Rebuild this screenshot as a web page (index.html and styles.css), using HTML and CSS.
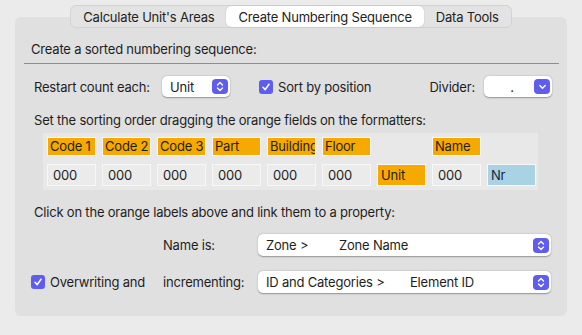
FILE: index.html
```html
<!DOCTYPE html>
<html>
<head>
    <title>Create Numbering Sequence</title>
    <link rel="stylesheet" href="styles.css">
</head>
<body>
    <div class="tabs">
        <div class="tab">Calculate Unit's Areas</div>
        <div class="tab tabActiva">Create Numbering Sequence</div>
        <div class="tab">Data Tools</div>
    </div>
    <div class="panel">
        <div class="encabezado">Create a sorted numbering sequence:</div>

        <div class="fila filaOpciones">
            <span class="etiquetaRestart">Restart count each:</span>
            <div class="combo comboUnit">
                <span>Unit</span>
                <span class="botonAzul">
                    <svg width="8" height="11" viewBox="0 0 8 11"><path d="M1.5 4 L4 1.5 L6.5 4 M1.5 7 L4 9.5 L6.5 7" fill="none" stroke="#fff" stroke-width="1.4" stroke-linecap="round" stroke-linejoin="round"/></svg>
                </span>
            </div>
            <label class="check checkSort">
                <span class="cajita"><svg width="10" height="10" viewBox="0 0 10 10"><path d="M2 5.3 L4.2 7.6 L8 2.3" fill="none" stroke="#fff" stroke-width="1.6" stroke-linecap="round" stroke-linejoin="round"/></svg></span>
                Sort by position
            </label>
            <span class="etiquetaDivider">Divider:</span>
            <div class="combo comboDivider">
                <span class="punto">.</span>
                <span class="botonAzul">
                    <svg width="9" height="6" viewBox="0 0 9 6"><path d="M1.8 1.5 L4.5 4.2 L7.2 1.5" fill="none" stroke="#fff" stroke-width="1.5" stroke-linecap="round" stroke-linejoin="round"/></svg>
                </span>
            </div>
        </div>

        <div class="texto textoOrden">Set the sorting order dragging the orange fields on the formatters:</div>

        <div class="formateador">
            <div class="campo naranja">Code 1</div>
            <div class="campo naranja">Code 2</div>
            <div class="campo naranja">Code 3</div>
            <div class="campo naranja">Part</div>
            <div class="campo naranja">Building</div>
            <div class="campo naranja">Floor</div>
            <div></div>
            <div class="campo naranja">Name</div>
            <div></div>

            <div class="campo entrada">000</div>
            <div class="campo entrada">000</div>
            <div class="campo entrada">000</div>
            <div class="campo entrada">000</div>
            <div class="campo entrada">000</div>
            <div class="campo entrada">000</div>
            <div class="campo entrada naranja">Unit</div>
            <div class="campo entrada">000</div>
            <div class="campo entrada celeste">Nr</div>
        </div>

        <div class="texto textoClick">Click on the orange labels above and link them to a property:</div>

        <div class="propiedades">
            <div></div>
            <span>Name is:</span>
            <div class="combo comboLargo">
                <span class="rutaZona">Zone &gt;</span>
                <span>Zone Name</span>
                <span class="botonAzul">
                    <svg width="8" height="11" viewBox="0 0 8 11"><path d="M1.5 4 L4 1.5 L6.5 4 M1.5 7 L4 9.5 L6.5 7" fill="none" stroke="#fff" stroke-width="1.4" stroke-linecap="round" stroke-linejoin="round"/></svg>
                </span>
            </div>

            <label class="check">
                <span class="cajita"><svg width="10" height="10" viewBox="0 0 10 10"><path d="M2 5.3 L4.2 7.6 L8 2.3" fill="none" stroke="#fff" stroke-width="1.6" stroke-linecap="round" stroke-linejoin="round"/></svg></span>
                Overwriting and
            </label>
            <span>incrementing:</span>
            <div class="combo comboLargo">
                <span class="rutaId">ID and Categories &gt;</span>
                <span>Element ID</span>
                <span class="botonAzul">
                    <svg width="8" height="11" viewBox="0 0 8 11"><path d="M1.5 4 L4 1.5 L6.5 4 M1.5 7 L4 9.5 L6.5 7" fill="none" stroke="#fff" stroke-width="1.4" stroke-linecap="round" stroke-linejoin="round"/></svg>
                </span>
            </div>
        </div>
    </div>
</body>
</html>
```
FILE: styles.css
```css
* {
    box-sizing: border-box;
}

body {
    margin: 0;
    padding: 0;
    background-color: #ebebeb;
    font-family: Inter, "Liberation Sans", sans-serif;
    font-size: 13px;
    letter-spacing: -0.2px;
    color: #1e1e1e;
}

.tabs {
    display: flex;
    width: max-content;
    margin: 5px auto 0;
    height: 23px;
    background-color: #e3e3e3;
    border: 1px solid #d3d3d3;
    border-radius: 6px;
    position: relative;
    z-index: 1;
}

.tab {
    display: flex;
    align-items: center;
    padding: 0 12px;
    color: #222;
}

.tabActiva {
    background-color: #fff;
    border-radius: 5px;
    box-shadow: 0 0 1px rgba(0, 0, 0, 0.35);
}

.panel {
    margin: -11px 15px 0;
    padding: 24px 15px 23px 19px;
    background-color: #e0e0e0;
    border-radius: 6px;
}

.encabezado {
    margin: 0 -7px 0 -10px;
    padding: 0 0 6px 7px;
    line-height: 16px;
    border-bottom: 1px solid #8e8e8e;
}

.fila {
    display: flex;
    align-items: center;
}

.filaOpciones {
    margin-top: 12px;
    height: 21px;
}

.etiquetaRestart {
    width: 128px;
}

.combo {
    display: flex;
    align-items: center;
    height: 21px;
    background-color: #fff;
    border-radius: 5px;
    box-shadow: 0 0.5px 1.5px rgba(0, 0, 0, 0.35);
    padding: 0 2px 0 8px;
}

.comboUnit {
    width: 68px;
    justify-content: space-between;
}

.botonAzul {
    display: flex;
    align-items: center;
    justify-content: center;
    width: 16px;
    height: 15px;
    margin-left: auto;
    background-color: #5f5cf0;
    border-radius: 4px;
}

.check {
    display: flex;
    align-items: center;
    gap: 5px;
}

.checkSort {
    margin-left: 29px;
}

.cajita {
    display: flex;
    align-items: center;
    justify-content: center;
    width: 14px;
    height: 14px;
    background-color: #5f5cf0;
    border-radius: 3px;
}

.etiquetaDivider {
    margin-left: auto;
    margin-right: 9px;
}

.comboDivider {
    width: 68px;
}

.punto {
    width: 40px;
    text-align: center;
}

.texto {
    line-height: 16px;
}

.textoOrden {
    margin-top: 15px;
}

.formateador {
    display: grid;
    grid-template-columns: repeat(9, 49px);
    grid-template-rows: 19px 22px;
    column-gap: 6px;
    row-gap: 8px;
    margin: 5px 14px 0 9px;
    padding: 4px 2px 4px 4px;
    background-color: #e8e8e8;
}

.campo {
    border: 1px solid #f7f7f7;
    padding: 0 2px;
    white-space: nowrap;
    overflow: hidden;
    line-height: 17px;
}

.naranja {
    background-color: #f6a900;
}

.entrada {
    background-color: #ebebeb;
    line-height: 20px;
    padding-left: 5px;
}

.entrada.naranja {
    background-color: #f6a900;
    padding-left: 3px;
}

.celeste {
    background-color: #a9d2e4;
    color: #17263a;
    padding-left: 3px;
}

.textoClick {
    margin-top: 14px;
}

.propiedades {
    display: grid;
    grid-template-columns: 132px 95px 293px;
    grid-auto-rows: 22px;
    row-gap: 15px;
    align-items: center;
    margin: 14px 0 0 -3px;
}

.comboLargo {
    height: 22px;
}

.rutaZona {
    width: 73px;
}

.rutaId {
    width: 144px;
}
```
